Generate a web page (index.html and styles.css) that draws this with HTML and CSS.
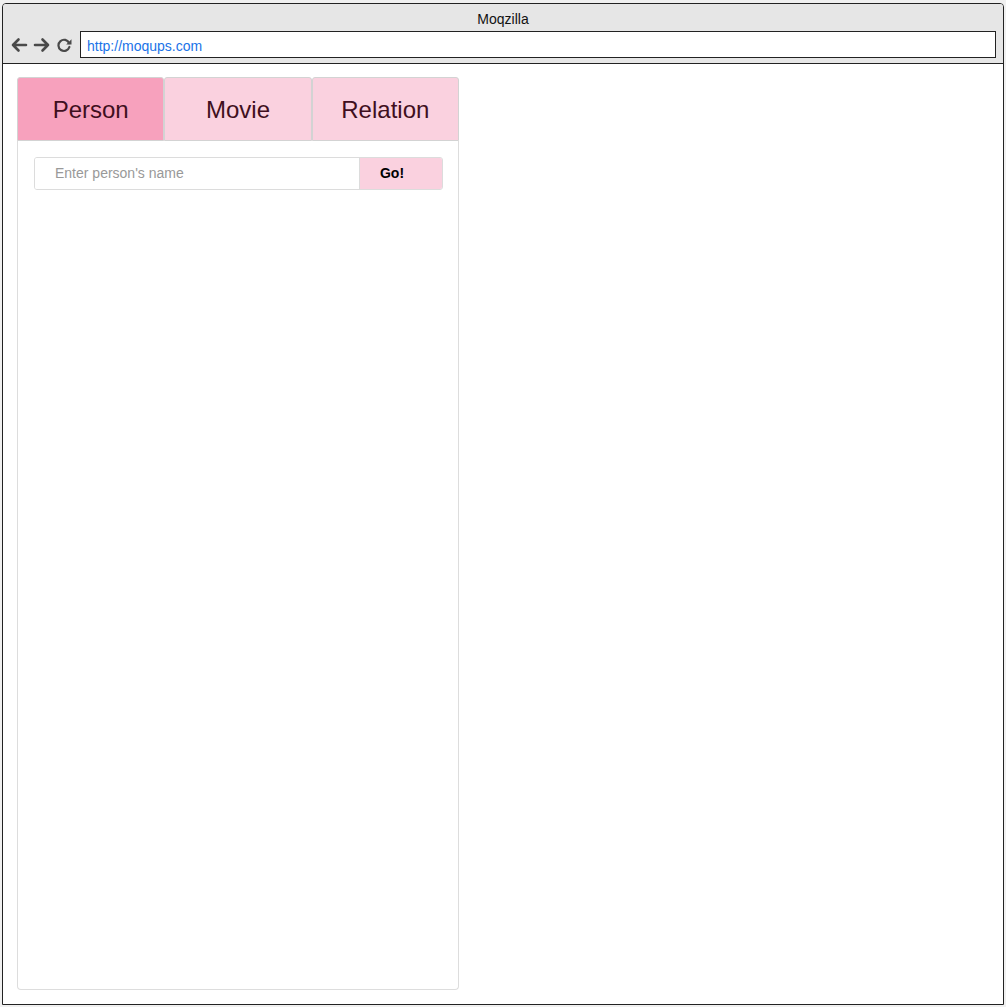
FILE: index.html
```
<!DOCTYPE html>
<html>
<head>
<meta charset="utf-8">
<link rel="stylesheet" href="styles.css">
</head>
<body>
<div class="window">
  <div class="titlebar">
    <div class="title">Moqzilla</div>
    <div class="navrow">
      <svg class="nav-icon" width="18" height="16" viewBox="0 0 18 16"><path d="M16 8H3M8.5 2.5L3 8l5.5 5.5" fill="none" stroke="#4a4a4a" stroke-width="2.6" stroke-linecap="round" stroke-linejoin="round"/></svg>
      <svg class="nav-icon" width="18" height="16" viewBox="0 0 18 16"><path d="M2 8h13M9.5 2.5L15 8l-5.5 5.5" fill="none" stroke="#4a4a4a" stroke-width="2.6" stroke-linecap="round" stroke-linejoin="round"/></svg>
      <svg class="nav-icon reload" width="17" height="16" viewBox="0 0 17 16"><path d="M13.2 6.2A5.6 5.6 0 1 0 13.4 10" fill="none" stroke="#4a4a4a" stroke-width="2.2" stroke-linecap="round"/><path d="M15.5 2.2v5.3h-5.3z" fill="#4a4a4a"/></svg>
      <div class="address">http://moqups.com</div>
    </div>
  </div>
  <div class="content">
    <div class="panel">
      <div class="tabs">
        <div class="tab active">Person</div>
        <div class="tab">Movie</div>
        <div class="tab">Relation</div>
      </div>
      <div class="panel-body">
        <div class="search">
          <div class="search-input">Enter person's name</div>
          <div class="go">Go!</div>
        </div>
      </div>
    </div>
  </div>
</div>
</body>
</html>
```
FILE: styles.css
```
* { box-sizing: border-box; }
html, body { margin: 0; padding: 0; }
body {
  background: #f0f0f0;
  font-family: "Liberation Sans", Arial, sans-serif;
  width: 1006px;
  height: 1007px;
  overflow: hidden;
}
.window {
  margin: 3px 0 0 2px;
  width: 1002px;
  height: 1002px;
  border: 1px solid #222;
  border-radius: 4px 4px 0 0;
  background: #fff;
  display: flex;
  flex-direction: column;
}
.titlebar {
  height: 60px;
  background: #e6e6e6;
  border-bottom: 1px solid #222;
  border-radius: 3px 3px 0 0;
  flex: none;
}
.title {
  text-align: center;
  font-size: 14px;
  color: #111;
  line-height: 16px;
  padding-top: 7px;
  height: 27px;
}
.navrow {
  display: flex;
  align-items: center;
  padding-left: 7px;
  padding-right: 7px;
}
.nav-icon { flex: none; margin-right: 5px; }
.reload { margin-right: 7px; margin-left: 0; }
.address {
  flex: 1;
  height: 27px;
  border: 1px solid #222;
  background: #fff;
  color: #1a73e8;
  font-size: 14px;
  line-height: 16px;
  padding-top: 6px;
  padding-left: 6px;
}
.content {
  flex: 1;
  padding: 13px 14px 14px 14px;
  display: flex;
}
.panel {
  width: 442px;
  display: flex;
  flex-direction: column;
}
.tabs {
  display: flex;
  height: 64px;
  flex: none;
}
.tab {
  flex: 1;
  border: 1px solid #d3d3d3;
  border-radius: 3px 3px 0 0;
  background: #fad1df;
  color: #3f0f20;
  font-size: 24px;
  display: flex;
  align-items: center;
  justify-content: center;
  padding-top: 2px;
}
.tab.active { background: #f7a1bd; }
.panel-body {
  flex: 1;
  border: 1px solid #ddd;
  border-top: none;
  border-radius: 0 0 4px 4px;
  padding: 16px 15px 16px 16px;
}
.search {
  display: flex;
  height: 33px;
  border: 1px solid #dcdcdc;
  border-radius: 3px;
  overflow: hidden;
}
.search-input {
  flex: 1;
  background: #fff;
  color: #999;
  font-size: 14px;
  line-height: 31px;
  padding-left: 20px;
  border-right: 1px solid #dcdcdc;
}
.go {
  width: 82px;
  background: #fad1df;
  font-weight: bold;
  font-size: 14px;
  line-height: 31px;
  text-align: center;
  padding-right: 18px;
  color: #000;
}
```
